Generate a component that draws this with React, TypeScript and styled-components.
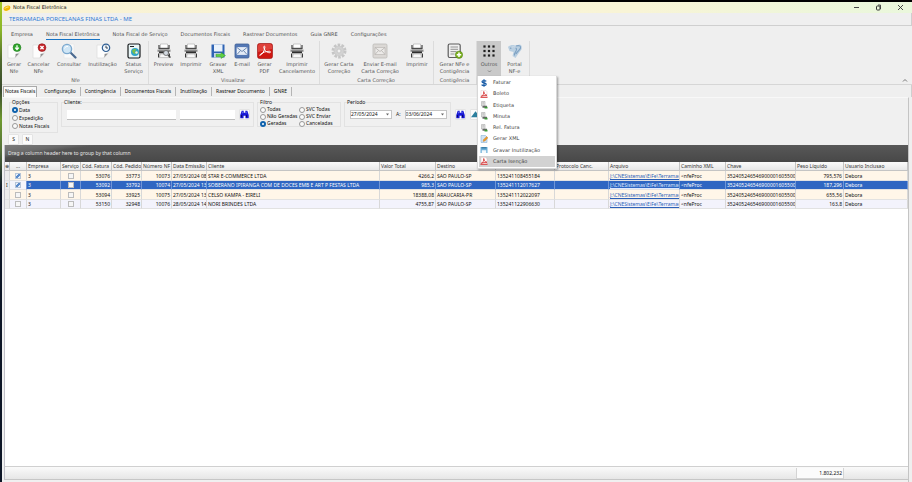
import React from "react";
import styled, { createGlobalStyle, css } from "styled-components";

const GlobalStyle = createGlobalStyle`
  * { box-sizing: border-box; }
  html, body, #root { height: 100%; margin: 0; }
  body { background: #000; overflow: hidden; }
  body, button, input, table { font: 5px/7px "Noto Sans", "Open Sans", sans-serif; color: #222; }
  button, input { margin: 0; padding: 0; border: 0; background: none; }
`;

const ribbonFont = css`
  font-family: "DejaVu Sans", "Noto Sans", sans-serif;
`;

const Desktop = styled.div`
  height: 100vh;
  padding: 2px 0 0 2px;
  background:
    linear-gradient(#000, #000) 0 0 / 100% 2px no-repeat,
    linear-gradient(#a5c927 0, #8bb62a 30px, #4f6a2c 60px, #39492f 90px, #6f9a30 120px, #55713a 150px, #0d1626 190px, #0d1626 100%);
`;

const Window = styled.div`
  height: 100%;
  display: flex;
  flex-direction: column;
  background: #efefef;
`;

const TitleBar = styled.header`
  display: flex;
  align-items: center;
  height: 11px;
  padding: 0 8px 0 1px;
  gap: 2px;
  background: linear-gradient(90deg, #f9f2d4, #f8f4d6 70%, #edf6da 90%, #eaf7dc);
  flex: none;
`;
const TitleText = styled.h1`
  ${ribbonFont}
  flex: 1;
  margin: 0;
  font-size: 5px;
  line-height: 7px;
  font-weight: 400;
  color: #111;
`;
const WindowButtons = styled.div`
  display: flex;
  gap: 15px;
`;
const WindowButton = styled.button`
  width: 7px;
  height: 7px;
  svg { display: block; }
`;

const Company = styled.div`
  flex: none;
  height: 13px;
  padding: 0 7px;
  border-bottom: 1px solid #cfcfcf;
  border-right: 1px solid #cfcfcf;
  color: #2f7bd6;
  font-size: 6px;
  line-height: 13px;
`;

const RibbonTabs = styled.nav`
  flex: none;
  display: flex;
  gap: 13px;
  height: 15px;
  padding: 3px 9px 0;
`;
const RibbonTab = styled.button<{ $active?: boolean }>`
  ${ribbonFont}
  height: 11px;
  color: #505050;
  border-bottom: 1px solid ${(p) => (p.$active ? "#1673c4" : "transparent")};
`;

const Ribbon = styled.section`
  flex: none;
  display: flex;
  height: 44px;
  padding: 0 0 0 2px;
  border-bottom: 1px solid #d6d6d6;
`;
const Group = styled.div<{ $wide?: boolean }>`
  ${ribbonFont}
  display: flex;
  flex-direction: column;
  justify-content: space-between;
  border-right: 1px solid #dcdcdc;
  padding: 0 ${(p) => (p.$wide ? 2 : 1)}px 0 0;
`;
const GroupItems = styled.div`
  display: flex;
`;
const GroupName = styled.div`
  text-align: center;
  color: #5c5c5c;
`;
const Tool = styled.button<{ $w: number; $on?: boolean }>`
  ${ribbonFont}
  width: ${(p) => p.$w}px;
  height: 35px;
  padding-top: 2px;
  display: flex;
  flex-direction: column;
  align-items: center;
  gap: 2px;
  color: #555;
  white-space: pre;
  background: ${(p) => (p.$on ? "#c9c9c9" : "none")};
  svg { display: block; flex: none; }
`;
const Spring = styled.div`
  flex: 1;
`;
const Collapse = styled.button`
  align-self: flex-end;
  margin-right: 4px;
  svg { display: block; }
`;

const MenuAnchor = styled.div`
  position: relative;
`;
const Menu = styled.div`
  position: absolute;
  top: 100%;
  left: 0;
  z-index: 5;
  width: 80px;
  height: 93px;
  padding: 1px;
  display: flex;
  flex-direction: column;
  justify-content: space-between;
  background: #fff;
  border: 1px solid #d8d8d8;
  border-top: 0;
  box-shadow: 1px 1px 2px rgba(0, 0, 0, 0.35);
`;
const MenuItem = styled.button<{ $on?: boolean }>`
  ${ribbonFont}
  display: flex;
  align-items: center;
  gap: 5px;
  height: 11px;
  padding-left: 1px;
  text-align: left;
  color: #444;
  background: ${(p) => (p.$on ? "#d2d2d2" : "none")};
`;

const DocTabs = styled.nav`
  flex: none;
  display: flex;
  align-items: center;
  height: 12px;
  padding-left: 1px;
  border-right: 1px solid #cfcfcf;
`;
const DocTab = styled.button<{ $active?: boolean }>`
  height: 9px;
  padding: 0 4px;
  color: #111;
  border-right: 1px solid #b5b5b5;
  ${(p) =>
    p.$active &&
    css`
      height: 11px;
      margin-right: 3px;
      padding: 0 1px;
      background: #fafafa;
      border: 1px solid #aaa;
      border-width: 1px 1px 0 1px;
    `}
`;

const Body = styled.main`
  flex: 1;
  min-height: 0;
  display: flex;
  flex-direction: column;
  margin-right: 3px;
  padding: 1px 0 2px 2px;
  background: #f0f0f0;
  border-top: 1px solid #f8f8f8;
  border-right: 1px solid #c4c4c4;
`;

const Filters = styled.form`
  flex: none;
  display: flex;
  align-items: flex-start;
  gap: 3px;
  height: 35px;
  padding-left: 5px;
`;
const Box = styled.fieldset<{ $w: number; $h: number }>`
  width: ${(p) => p.$w}px;
  height: ${(p) => p.$h}px;
  min-width: 0;
  margin: 0;
  padding: 0 2px;
  border: 1px solid #e2e2e2;
  legend {
    padding: 0;
    color: #111;
  }
`;
const RadioList = styled.div<{ $cols: string; $row: number }>`
  display: grid;
  grid-template-columns: ${(p) => p.$cols};
  grid-auto-rows: ${(p) => p.$row}px;
`;
const RadioLabel = styled.label`
  display: flex;
  align-items: center;
  gap: 1px;
  white-space: nowrap;
  color: #111;
  input {
    appearance: none;
    width: 6px;
    height: 6px;
    border: 1px solid #999;
    border-radius: 50%;
    background: #fafafa;
  }
  input:checked {
    border: 2px solid #0f62ad;
    background: #fff;
  }
`;
const Fields = styled.div`
  display: flex;
  align-items: center;
  gap: 4px;
  min-height: 14px;
  padding: 3px 1px 0 3px;
`;
const TextBox = styled.input<{ $grow: number }>`
  flex: ${(p) => p.$grow} 1 0;
  min-width: 0;
  height: 10px;
  background: #fff;
  border-bottom: 1px solid #bdbdbd;
`;
const DateBox = styled.div`
  display: flex;
  align-items: center;
  width: 42px;
  height: 9px;
  background: #fff;
  border: 1px solid #c4c4c4;
  input { flex: 1; min-width: 0; color: #111; }
  button { width: 7px; height: 7px; }
  svg { display: block; margin: auto; }
`;
const SmallButton = styled.button`
  display: flex;
  align-items: center;
  justify-content: center;
  width: 11px;
  height: 11px;
  background: #fbfbfb;
  border: 1px solid #e4e4e4;
  border-radius: 1px;
  color: #222;
`;
const SearchButtons = styled.div`
  display: flex;
  gap: 4px;
  padding: 10px 0 0 1px;
`;
const Marks = styled.div`
  flex: none;
  display: flex;
  gap: 3px;
  height: 11px;
  padding: 0 0 1px 4px;
`;

const GridPanel = styled.section`
  flex: 1;
  min-height: 0;
  display: flex;
  flex-direction: column;
  background: #fff;
  border-left: 1px solid #c0c0c8;
`;
const GroupBar = styled.div`
  flex: none;
  height: 17px;
  padding-left: 3px;
  line-height: 17px;
  color: #e6e6e6;
  background:
    linear-gradient(172deg, #7c7c7c 0, #6a6a6a 9px, transparent 13px) 0 0 / 140px 100% no-repeat,
    linear-gradient(#585858, #484848);
`;
const Sheet = styled.table`
  width: 100%;
  table-layout: fixed;
  border-collapse: separate;
  border-spacing: 0;
  line-height: 8px;
  th, td {
    padding: 0 1px;
    overflow: hidden;
    white-space: nowrap;
    text-align: left;
    font-weight: 400;
    color: #111;
    border-right: 1px solid #d8d8d8;
    border-bottom: 1px solid #e2e2e2;
  }
  th {
    height: 9px;
    color: #333;
    background: linear-gradient(#fbfbfb, #e8e8e8);
    border-color: #c4c4c4;
  }
  th:first-child { padding: 0; }
  th:nth-child(2) { text-align: center; }
  input {
    appearance: none;
    display: block;
    width: 6px;
    height: 6px;
    margin: 0 auto;
    border: 1px solid #bcbcbc;
    background: #f6f6f6;
  }
  input:checked {
    border-color: #b4c4d8;
    background: linear-gradient(135deg, #e6eef8 30%, #5b8ccb 31%, #5b8ccb 65%, #e6eef8 66%);
  }
`;
const Row = styled.tr<{ $tone: "cream" | "blue" | "pale" }>`
  height: 10px;
  background: ${(p) => ({ cream: "#fff6e9", blue: "#2f66c2", pale: "#f3f3fc" })[p.$tone]};
  &:nth-child(even) { height: 9px; }
  td:first-child { background: #ececec; }
  ${(p) =>
    p.$tone === "blue" &&
    css`
      td:not(:first-child) { color: #fff; border-right-color: #6f95d6; }
      td:nth-child(2) { background: #f3f5fb; }
    `}
`;
const Cell = styled.td<{ $right?: boolean }>`
  && { text-align: ${(p) => (p.$right ? "right" : "left")}; }
`;
const FileLink = styled.a`
  color: #2b5fb8;
  text-decoration: underline;
  tr[aria-selected="true"] & { color: #dfe9ff; }
`;
const Space = styled.div`
  flex: 1;
`;
const Footer = styled.footer`
  flex: none;
  height: 14px;
  padding-top: 1px;
  border-top: 1px solid #d0d0d0;
  border-bottom: 1px solid #c6c6c6;
  background: linear-gradient(#fafafa, #e6e6e6);
  td { height: 11px; border: 0; }
`;
const Total = styled.td`
  && {
    text-align: right;
    background: #fbfbfb;
    border: 1px solid #d4d4d4;
    border-top: 0;
  }
`;

/* ---------- icons ---------- */
const Svg = ({ s = 16, children }: { s?: number; children: React.ReactNode }) => (
  <svg width={s} height={s} viewBox="0 0 16 16" aria-hidden="true">{children}</svg>
);
const Page = () => <path d="M2 2h11v9l-4 4H2z" fill="#fdfdfd" stroke="#d6d6d6" strokeWidth=".6" />;
const Fold = () => <path d="M13 10.500c-2 0-3 .2-3.500.5.2 1 .2 2.500-1 4z" fill="#8f8f8f" />;
const PageAdd = () => (
  <Svg><Page /><Fold /><circle cx="11" cy="4.600" r="3.900" fill="#2fa52c" stroke="#1c7a1b" strokeWidth=".6" /><path d="M11 2.200v4M9.200 4.600 11 6.600l1.800-2" stroke="#fff" strokeWidth="1.300" fill="none" /></Svg>
);
const PageCancel = () => (
  <Svg><Page /><Fold /><circle cx="11" cy="4.600" r="3.900" fill="#c8252a" stroke="#8f1518" strokeWidth=".6" /><path d="m9.400 3 3.200 3.200M12.600 3 9.400 6.200" stroke="#fff" strokeWidth="1.400" /></Svg>
);
const PageClock = () => (
  <Svg><Page /><Fold /><circle cx="11" cy="4.800" r="3.700" fill="#eef5fc" stroke="#2e5d92" strokeWidth="1.200" /><path d="M11 2.600v2.400h2" stroke="#234" strokeWidth=".9" fill="none" /></Svg>
);
const Magnifier = () => (
  <Svg><path d="M3 1h10v14H3z" fill="#fafafa" stroke="#e0e0e0" strokeWidth=".5" /><path d="m9.500 9.500 5 5" stroke="#4b6a90" strokeWidth="2.200" strokeLinecap="round" /><circle cx="6" cy="6" r="4.600" fill="#cfe6f6" stroke="#7ca9cf" strokeWidth="1.400" /><path d="M3.500 5.500c.5-1.500 2-2.300 3.500-2" stroke="#fff" fill="none" /></Svg>
);
const StatusIcon = () => (
  <Svg><rect x="2" y="1" width="12" height="14" rx="1.500" fill="#e9f5f6" stroke="#16191c" strokeWidth="1.200" /><path d="M4 3.500h4" stroke="#222" /><circle cx="9" cy="9" r="4" fill="#2fa4c9" /><path d="M6 8c2-3 4-2 4-1s-2 1-1 3-2 1-3-2z" fill="#7cc043" /><circle cx="10.500" cy="9.500" r="1.200" fill="#f3f3d0" /></Svg>
);
const Printer = ({ lens = false }: { lens?: boolean }) => (
  <Svg>
    <path d="M4.500 1h7v4.500h-7z" fill="#fff" stroke="#aaa" strokeWidth=".6" />
    <path d="M3 2v4M13 2v4" stroke="#333" strokeWidth="1.100" />
    <path d="M3 4.800h10v1.500H3z" fill="#4a4a4a" />
    <path d="M1.500 6.600h13v2.200h-13z" fill="#8b8b8b" /><path d="M3 8.400h10v1.900H3z" fill="#2f2f2f" />
    <path d="M4.300 11h7.400l.8 3.600h-9z" fill="#f8f8f8" stroke="#999" strokeWidth=".5" /><path d="M2.600 10.500v4M13.400 10.500v4" stroke="#333" strokeWidth="1.100" />
    {lens && <><circle cx="10" cy="10" r="2.500" fill="#d4dbe2" stroke="#666" strokeWidth=".8" /><path d="m12 12 2.500 2.500" stroke="#444" strokeWidth="1.300" /></>}
  </Svg>
);
const Disk = () => (
  <Svg><path d="M1.500 1.500h13v13h-13z" fill="#2e63b4" /><path d="M4 1.500h8.500v7H4z" fill="#eaf2fb" /><path d="M4 10h8v4.500H4z" fill="#c7d5e6" /><path d="M6 11.200h5V9.500l4.500 3-4.500 3v-1.800H6z" fill="#5fd043" stroke="#2b8d1c" strokeWidth=".4" /></Svg>
);
const Mail = ({ off = false }: { off?: boolean }) => (
  <Svg><rect x="1" y="1" width="14" height="14" rx="1.200" fill={off ? "#dbd8d5" : "#5478b5"} stroke={off ? "#bdbbb8" : "#3f5f98"} strokeWidth=".8" /><path d="M3 4.500h10v7H3z" fill={off ? "#eceae8" : "#e3ebf7"} stroke={off ? "#b5b2af" : "#fff"} strokeWidth=".6" /><path d="m3 4.500 5 4 5-4M3 11.500l3.500-4M13 11.500l-3.500-4" stroke={off ? "#b5b2af" : "#54749f"} strokeWidth=".8" fill="none" /></Svg>
);
const Swirl = () => (
  <path d="M2.800 12.400c2.400-.8 4.600-4 5.100-8.200.1-1.500-1.300-1.400-1.100 0 .5 3 2.900 5.700 6 5.500 1.200-.2.900-1.500-.5-1.500-3.400 0-6.700 1.300-8.900 3.200-.8.800-1 .9-.6 1z" fill="none" stroke="#fff" strokeWidth="1" />
);
const Pdf = () => (
  <Svg><rect x=".5" y=".5" width="15" height="15" rx="2" fill="#cf1712" stroke="#9b0d0a" strokeWidth=".6" /><path d="M1 3a2 2 0 0 1 2-2h10a2 2 0 0 1 2 2v3L1 9z" fill="#e5534c" opacity=".7" /><Swirl /></Svg>
);
const Gear = () => (
  <Svg><circle cx="8" cy="8" r="6.200" fill="none" stroke="#c6c6c6" strokeWidth="2.600" strokeDasharray="2.600 1.270" /><circle cx="8" cy="8" r="5" fill="#d2d2d2" stroke="#bcbcbc" strokeWidth=".5" /><circle cx="8" cy="8" r="1.900" fill="#f1f1f1" stroke="#b4b4b4" strokeWidth=".5" /></Svg>
);
const SheetAdd = () => (
  <Svg><rect x="1.200" y="1" width="12" height="13.500" rx="1.500" fill="#f0f0f0" stroke="#5d5d5d" strokeWidth="1.200" /><path d="M3.500 4h7.500M3.500 6.300h7.500M3.500 8.600h6M3.500 11h4" stroke="#888" strokeWidth=".9" /><circle cx="12" cy="11.800" r="3.600" fill="#7fb51f" stroke="#4c7c10" strokeWidth=".6" /><path d="M12 9.600v4.400M9.800 11.800h4.400" stroke="#fff" strokeWidth="1.500" /></Svg>
);
const Dots = () => (
  <Svg>{[3.500, 8, 12.500].map((y) => [3.500, 8, 12.500].map((x) => <rect key={`${x}-${y}`} x={x - 1.1} y={y - 1.1} width="2.200" height="2.200" fill="#1f1f1f" />))}</Svg>
);
const Portal = () => (
  <Svg><path d="M1 4c2-2 5-2.500 7-1.500l5-1c2 .5 2 3 1.500 5l-3 4-3 4.500-3-2 1-4-4-1z" fill="#b9cfe1" /><path d="M3 5.500c3-2 6-1.500 6.500.5S7 9.500 7.500 12.500M9 3c3-1 5 0 4.500 2s-3 3-4.500 6" stroke="#7da0c2" strokeWidth="1.100" fill="none" /><path d="M4.500 4.500c2-.8 3-.5 4 .2" stroke="#eef4f8" strokeWidth="1" fill="none" /></Svg>
);
const Binoculars = () => (
  <Svg s={9}><path d="M3 1.500h3.500V5h3V1.500H13L15.500 9v5.500H9.700V10H6.300v4.500H.5V9z" fill="#1616d6" /><path d="M2.500 9v4M11.700 9v4" stroke="#0a0a50" strokeWidth="1.600" /><path d="M4.500 3v3M11 3v3" stroke="#8c9cff" strokeWidth="1" /></Svg>
);
const Triangle = () => <Svg s={9}><path d="M8 2 16 13H0z" fill="#2c7f9e" /></Svg>;
const Arrow = () => <svg width="5" height="3" viewBox="0 0 5 3" aria-hidden="true"><path d="M1 .5h3L2.500 2.500z" fill="#666" /></svg>;
const Chevron = () => <svg width="5" height="3" viewBox="0 0 5 3" aria-hidden="true"><path d="m1 .5 1.500 1.500L4 .5" stroke="#777" strokeWidth=".8" fill="none" /></svg>;
const MoneyIcon = () => <Svg s={8}><path d="M12.500 4.500C11 2.500 4 2.300 4 5.300c0 3.400 8.500 1.800 8.500 5.400 0 3.300-7.500 3-9.300.6M8 .5v15" stroke="#1d5fa8" strokeWidth="2.500" fill="none" /></Svg>;
const PdfSmall = () => <Svg s={8}><path d="M2 .5h9l3 3v12H2z" fill="#fff" stroke="#d8b0b0" strokeWidth=".8" /><path d="M2.500 12.500C6 11.500 8 7 7.500 3c1 5 3 7.500 6.500 7.500-4 0-8 .5-11.500 2z" stroke="#cf2020" strokeWidth="1.500" fill="none" /><path d="M1 13.500h14v2H1z" fill="#d62b2b" /></Svg>;
const TagIcon = () => <Svg s={8}><path d="M3 1h7v9H3z" fill="#eee" stroke="#999" /><path d="M4.500 3.500h4M4.500 6h4" stroke="#888" /><path d="M5 9.500h9v4H5z" fill="#666" /><path d="M9 11.500h6v3.500H9z" fill="#3e9b3a" /></Svg>;
const EditIcon = () => <Svg s={8}><path d="M2 1h9l3 3v11H2z" fill="#cfe3f5" stroke="#7ba6cc" /><path d="m6 13 1-4 6.500-6 2.500 2.500L10 12z" fill="#ee9a2c" stroke="#a3601a" strokeWidth=".5" /></Svg>;
const DiskSmall = () => <Svg s={8}><path d="M1 2h14v12H1z" fill="#6db0d8" /><path d="M3.500 8.500h9V14h-9z" fill="#f4f9fc" /><path d="M3 2h10v3H3z" fill="#3d7fa8" /></Svg>;

/* ---------- data ---------- */
type ToolDef = [label: string, width: number, icon: React.ReactNode];
const groups: { name: string; tools: ToolDef[]; wide?: boolean }[] = [
  { name: "Nfe", tools: [["Gerar\nNfe", 20, <PageAdd />], ["Cancelar\nNFe", 29, <PageCancel />], ["Consultar", 32, <Magnifier />], ["Inutilização", 35, <PageClock />], ["Status\nServiço", 27, <StatusIcon />]] },
  { name: "Visualizar", wide: true, tools: [["Preview", 29, <Printer lens />], ["Imprimir", 26, <Printer />], ["Gravar\nXML", 28, <Disk />], ["E-mail", 20, <Mail />], ["Gerar\nPDF", 25, <Pdf />], ["Imprimir\nCancelamento", 40, <Printer />]] },
  { name: "Carta Correção", tools: [["Gerar Carta\nCorreção", 38, <Gear />], ["Enviar E-mail\nCarta Correção", 44, <Mail off />], ["Imprimir", 30, <Printer />]] },
  { name: "Contigência", tools: [["Gerar NFe e\nContigência", 41, <SheetAdd />]] },
];
const ribbonTabs = ["Empresa", "Nota Fiscal Eletrônica", "Nota Fiscal de Serviço", "Documentos Fiscais", "Rastrear Documentos", "Guia GNRE", "Configurações"];
const docTabs = ["Notas Fiscais", "Configuração", "Contingência", "Documentos Fiscais", "Inutilização", "Rastrear Documento", "GNRE"];
const menuItems: [string, React.ReactNode][] = [
  ["Faturar", <MoneyIcon />], ["Boleto", <PdfSmall />], ["Etiqueta", <TagIcon />], ["Minuta", <TagIcon />],
  ["Rel. Fatura", <TagIcon />], ["Gerar XML", <EditIcon />], ["Gravar Inutilização", <DiskSmall />], ["Carta Isenção", <PdfSmall />],
];
const columns: [string, number | undefined][] = [
  ["⊕", 5], ["...", 17], ["Empresa", 34], ["Serviço", 20], ["Cód. Fatura", 31], ["Cód. Pedido", 30], ["Número NF", 30],
  ["Data Emissão", 35], ["Cliente", 173], ["Valor Total", 56], ["Destino", 60], ["", 59], ["Protocolo Canc.", 54],
  ["Arquivo", 71], ["Caminho XML", 46], ["Chave", 70], ["Peso Líquido", 48], ["Usuario Inclusao", undefined],
];
const rows = [
  { on: true, tone: "cream", v: ["53076", "33773", "10073", "27/05/2024 08", "STAR E-COMMERCE LTDA", "4266,2", "SAO PAULO-SP", "135241108455184", "795,576"] },
  { on: true, tone: "blue", v: ["53092", "33792", "10074", "27/05/2024 13", "SOBERANO IPIRANGA COM DE DOCES EMB E ART P FESTAS LTDA", "985,3", "SAO PAULO-SP", "135241112017627", "187,296"] },
  { on: false, tone: "cream", v: ["53094", "33925", "10075", "27/05/2024 13", "CELSO KAMPA - EIRELI", "18388,08", "ARAUCARIA-PR", "135241112022097", "655,56"] },
  { on: false, tone: "pale", v: ["53150", "32948", "10076", "28/05/2024 14", "NORI BRINDES LTDA", "4755,87", "SAO PAULO-SP", "135241122906630", "163,8"] },
] as const;

const Cols = () => <colgroup>{columns.map(([n, w]) => <col key={n} style={{ width: w }} />)}</colgroup>;
const Radio = ({ name, label, checked }: { name: string; label: string; checked?: boolean }) => (
  <RadioLabel><input type="radio" name={name} defaultChecked={checked} />{label}</RadioLabel>
);
const DateField = ({ label, value }: { label: string; value: string }) => (
  <DateBox><input aria-label={label} defaultValue={value} /><button type="button" aria-label={`Abrir ${label}`}><Arrow /></button></DateBox>
);

export default function App() {
  return (
    <Desktop>
      <GlobalStyle />
      <Window>
        <TitleBar>
          <svg width="8" height="8" viewBox="0 0 16 16" aria-hidden="true"><path d="M1 10c0-4 4-6 9-7 4 0 6 3 4 7-3 4-12 6-13 0z" fill="#f2b705" /><path d="M4 9c1-2 4-3 7-3" stroke="#fff2a8" strokeWidth="2" fill="none" /></svg>
          <TitleText>Nota Fiscal Eletrônica</TitleText>
          <WindowButtons>
            <WindowButton aria-label="Minimizar"><svg width="7" height="7" viewBox="0 0 7 7"><path d="M1 3.500h5" stroke="#444" /></svg></WindowButton>
            <WindowButton aria-label="Restaurar"><svg width="7" height="7" viewBox="0 0 7 7"><rect x="1.500" y="2" width="3.500" height="4" rx=".8" fill="none" stroke="#333" /><path d="M3 1h2.500v4" fill="none" stroke="#333" strokeWidth=".8" /></svg></WindowButton>
            <WindowButton aria-label="Fechar"><svg width="7" height="7" viewBox="0 0 7 7"><path d="m1 1 5 5M6 1 1 6" stroke="#333" strokeWidth=".9" /></svg></WindowButton>
          </WindowButtons>
        </TitleBar>
        <Company>TERRAMADA PORCELANAS FINAS LTDA - ME</Company>
        <RibbonTabs>{ribbonTabs.map((t, i) => <RibbonTab key={t} $active={i === 1}>{t}</RibbonTab>)}</RibbonTabs>
        <Ribbon>
          {groups.map((g) => (
            <Group key={g.name} $wide={g.wide}>
              <GroupItems>{g.tools.map(([label, w, icon]) => <Tool key={label} $w={w}>{icon}<span>{label}</span></Tool>)}</GroupItems>
              <GroupName>{g.name}</GroupName>
            </Group>
          ))}
          <Group>
            <GroupItems>
              <MenuAnchor>
                <Tool $w={24} $on aria-haspopup="menu" aria-expanded="true"><Dots /><span>Outros</span><Chevron /></Tool>
                <Menu role="menu">
                  {menuItems.map(([label, icon], i) => <MenuItem key={label} role="menuitem" $on={i === 7}>{icon}{label}</MenuItem>)}
                </Menu>
              </MenuAnchor>
              <Tool $w={27}><Portal /><span>{"Portal\nNF-e"}</span></Tool>
            </GroupItems>
          </Group>
          <Spring />
          <Collapse aria-label="Recolher"><svg width="6" height="7" viewBox="0 0 6 7"><path d="m1 4.500 2-2 2 2" stroke="#777" fill="none" /></svg></Collapse>
        </Ribbon>
        <DocTabs>{docTabs.map((t, i) => <DocTab key={t} $active={i === 0}>{t}</DocTab>)}</DocTabs>
        <Body>
          <Filters>
            <Box $w={49} $h={34}>
              <legend>Opções</legend>
              <RadioList $cols="1fr" $row={8}>
                <Radio name="opcao" label="Data" checked /><Radio name="opcao" label="Expedição" /><Radio name="opcao" label="Notas Fiscais" />
              </RadioList>
            </Box>
            <Box $w={193} $h={28}>
              <legend>Cliente:</legend>
              <Fields>
                <TextBox $grow={2} aria-label="Cliente" /><TextBox $grow={1} aria-label="Código do cliente" />
                <SmallButton type="button" aria-label="Buscar cliente"><Binoculars /></SmallButton>
              </Fields>
            </Box>
            <Box $w={84} $h={28}>
              <legend>Filtro</legend>
              <RadioList $cols="39px 1fr" $row={7}>
                <Radio name="filtro" label="Todas" /><Radio name="filtro" label="SVC Todas" />
                <Radio name="filtro" label="Não Geradas" /><Radio name="filtro" label="SVC Enviar" />
                <Radio name="filtro" label="Geradas" checked /><Radio name="filtro" label="Canceladas" />
              </RadioList>
            </Box>
            <Box $w={107} $h={28}>
              <legend>Período</legend>
              <Fields><DateField label="Data inicial" value="27/05/2024" /><span>A:</span><DateField label="Data final" value="03/06/2024" /></Fields>
            </Box>
            <SearchButtons>
              <SmallButton type="button" aria-label="Buscar"><Binoculars /></SmallButton>
              <SmallButton type="button" aria-label="Subir"><Triangle /></SmallButton>
            </SearchButtons>
          </Filters>
          <Marks><SmallButton>S</SmallButton><SmallButton>N</SmallButton></Marks>
          <GridPanel>
            <GroupBar>Drag a column header here to group by that column</GroupBar>
            <Sheet>
              <Cols />
              <thead><tr>{columns.map(([n]) => <th key={n}>{n}</th>)}</tr></thead>
              <tbody>
                {rows.map((r) => (
                  <Row key={r.v[0]} $tone={r.tone} aria-selected={r.tone === "blue"}>
                    <Cell>{r.tone === "blue" ? "I" : ""}</Cell>
                    <Cell><input type="checkbox" defaultChecked={r.on} aria-label={`Selecionar ${r.v[0]}`} /></Cell>
                    <Cell>3</Cell>
                    <Cell><input type="checkbox" aria-label={`Serviço ${r.v[0]}`} /></Cell>
                    <Cell $right>{r.v[0]}</Cell><Cell $right>{r.v[1]}</Cell><Cell $right>{r.v[2]}</Cell>
                    <Cell>{r.v[3]}</Cell><Cell>{r.v[4]}</Cell><Cell $right>{r.v[5]}</Cell><Cell>{r.v[6]}</Cell><Cell>{r.v[7]}</Cell><Cell />
                    <Cell><FileLink href="#arquivo">J:\CNESistemas\EiFe\Terramac</FileLink></Cell>
                    <Cell>&lt;nfeProc</Cell><Cell>352405246546900001605500</Cell><Cell $right>{r.v[8]}</Cell><Cell>Debora</Cell>
                  </Row>
                ))}
              </tbody>
            </Sheet>
            <Space />
            <Footer>
              <Sheet><Cols /><tbody><tr><td colSpan={16} /><Total>1.802,232</Total><td /></tr></tbody></Sheet>
            </Footer>
          </GridPanel>
        </Body>
      </Window>
    </Desktop>
  );
}
